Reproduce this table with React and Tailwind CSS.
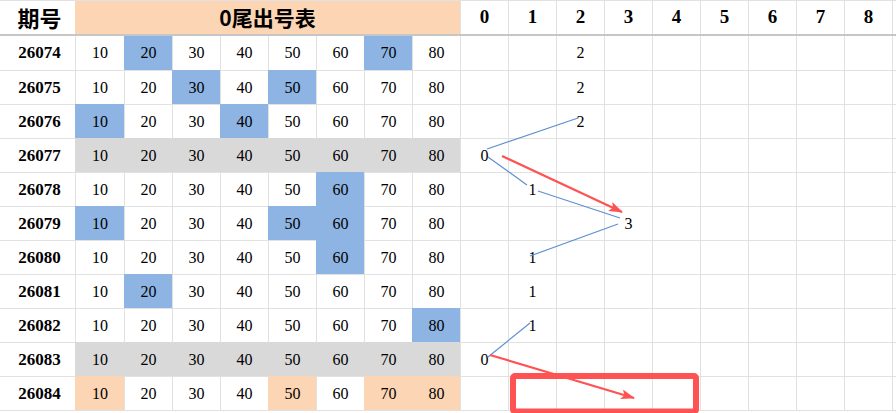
const B = 'b'
const G = 'g'
const P = 'p'

const ROWS = [
  { id: '26074', fill: { 20: B, 70: B }, v: 2 },
  { id: '26075', fill: { 30: B, 50: B }, v: 2 },
  { id: '26076', fill: { 10: B, 40: B }, v: 2 },
  { id: '26077', all: G, v: 0 },
  { id: '26078', fill: { 60: B }, v: 1 },
  { id: '26079', fill: { 10: B, 50: B, 60: B }, v: 3 },
  { id: '26080', fill: { 60: B }, v: 1 },
  { id: '26081', fill: { 20: B }, v: 1 },
  { id: '26082', fill: { 80: B }, v: 1 },
  { id: '26083', all: G, v: 0 },
  { id: '26084', fill: { 10: P, 50: P, 70: P, 80: P }, v: null },
]

const NUMS = [10, 20, 30, 40, 50, 60, 70, 80]
const TAILS = [0, 1, 2, 3, 4, 5, 6, 7, 8]

const FILL_CLS = {
  b: 'bg-[#8db4e2] border-[#8db4e2]',
  g: 'bg-[#d9d9d9] border-[#d9d9d9]',
  p: 'bg-[#fcd5b4] border-[#fcd5b4]',
}

const GRID = 'grid grid-cols-[75px_49px_repeat(16,48px)_1fr]'
const serif = "font-['Liberation_Serif',serif]"

function Row({ row, first }) {
  const top = first ? '' : 'border-t'
  return (
    <div className={`${GRID} h-[34px]`}>
      <div className={`${top} border-[#e1e1e1] flex items-center justify-center pl-1 ${serif} font-bold text-[17px] text-black`}>
        {row.id}
      </div>
      {NUMS.map((n) => {
        const f = row.all || (row.fill && row.fill[n])
        const cls = f ? FILL_CLS[f] : 'bg-white border-[#e1e1e1]'
        return (
          <div key={n} className={`${top} border-l ${cls} flex items-center justify-center ${serif} text-[16px] text-black`}>
            {n}
          </div>
        )
      })}
      {TAILS.map((t) => (
        <div key={t} className={`${top} border-l border-[#e1e1e1] flex items-center justify-center ${serif} text-[16px] text-black`}>
          {row.v === t ? t : ''}
        </div>
      ))}
      <div className={`${top} border-l border-[#e1e1e1]`} />
    </div>
  )
}

export default function App() {
  return (
    <div className="relative w-[896px] h-[413px] overflow-hidden bg-white">
      <div className="border-t border-[#e1e1e1]">
        {/* Header */}
        <div className={`${GRID} h-[35px] border-b-2 border-b-[#c6c6c6]`}>
          <div className="flex items-center justify-center pl-1 font-['Noto_Sans_CJK_SC',sans-serif] font-bold text-[22px] text-black">
            期号
          </div>
          <div className="col-span-8 flex items-center justify-center bg-[#fcd5b4] font-['Noto_Sans_CJK_SC',sans-serif] font-bold text-[21px] text-black">
            0尾出号表
          </div>
          {TAILS.map((t) => (
            <div key={t} className={`border-l border-[#e1e1e1] flex items-center justify-center ${serif} font-bold text-[19px] text-black`}>
              {t}
            </div>
          ))}
          <div className="border-l border-[#e1e1e1]" />
        </div>
        {ROWS.map((r, i) => (
          <Row key={r.id} row={r} first={i === 0} />
        ))}
        <div className="border-t border-[#e1e1e1]" />
      </div>

      {/* trend lines */}
      <svg className="absolute left-0 top-0 pointer-events-none" width="896" height="413" viewBox="0 0 896 413">
        <defs>
          <marker id="ah" markerUnits="userSpaceOnUse" markerWidth="14" markerHeight="10" refX="13" refY="5" orient="auto">
            <path d="M0,0 L14,5 L0,10 L3,5 z" fill="#ff5252" />
          </marker>
        </defs>
        <g stroke="#5e8fd2" strokeWidth="1.2" fill="none">
          <line x1="578" y1="118" x2="487" y2="149" />
          <line x1="488" y1="157" x2="527" y2="185" />
          <line x1="538" y1="191" x2="620" y2="218" />
          <line x1="618" y1="224" x2="530" y2="256" />
          <line x1="530" y1="323" x2="488" y2="357" />
        </g>
        <g stroke="#ff5252" strokeWidth="2.2" fill="none">
          <line x1="502" y1="156" x2="622" y2="212" markerEnd="url(#ah)" />
          <line x1="490" y1="355" x2="634" y2="398" markerEnd="url(#ah)" />
        </g>
        <rect x="513" y="376" width="183" height="35.5" rx="2" fill="none" stroke="#ff5252" strokeWidth="6" />
      </svg>
    </div>
  )
}
